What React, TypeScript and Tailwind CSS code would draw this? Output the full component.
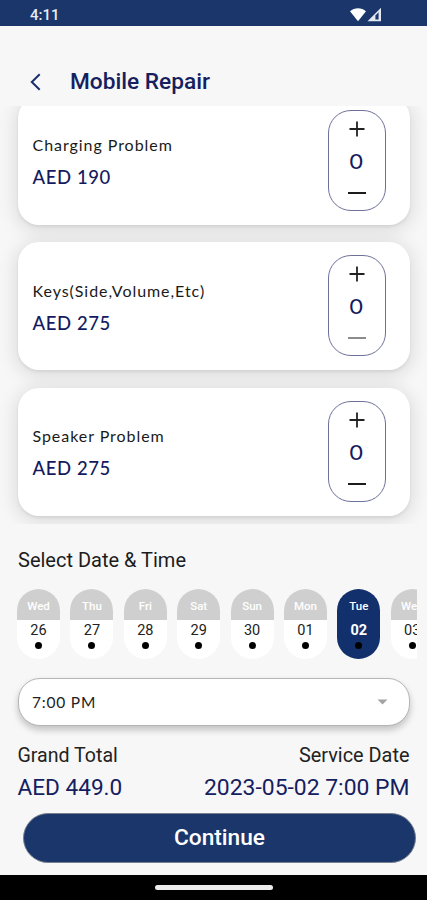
import { clsx } from 'clsx';

const services = [
  { name: 'Charging Problem', price: 'AED 190', tracking: 'tracking-[0.95px]', minus: 'bg-[#1c1c1c]' },
  { name: 'Keys(Side,Volume,Etc)', price: 'AED 275', tracking: 'tracking-[0.95px]', minus: 'bg-[#8c8c8c]' },
  { name: 'Speaker Problem', price: 'AED 275', tracking: 'tracking-[0.95px]', minus: 'bg-[#1c1c1c]' },
];

const days = [
  { day: 'Wed', date: '26' },
  { day: 'Thu', date: '27' },
  { day: 'Fri', date: '28' },
  { day: 'Sat', date: '29' },
  { day: 'Sun', date: '30' },
  { day: 'Mon', date: '01' },
  { day: 'Tue', date: '02', selected: true },
  { day: 'Wed', date: '03' },
];

const StatusBar = () => (
  <div className="flex h-[26px] shrink-0 items-center justify-between bg-[#1a366b] pl-[30px] pr-[45px] pt-1">
    <span className="text-[15px] leading-none font-medium text-[#e8ebf2]">4:11</span>
    <svg width="33" height="15" viewBox="0 0 33 15" className="-mt-[2px]">
      <path d="M1 4.2C5.5.2 12.5.2 17 4.2L9 14.2Z" fill="#fff" />
      <path d="M32 .8V14.2H18.5Z" fill="#e4e8f1" />
      <path d="M26.4 8.4V12.4H29.6V5.2Z" fill="#1a366b" />
    </svg>
  </div>
);

const Header = () => (
  <header className="flex h-20 shrink-0 items-center pl-[30px] pt-[31px]">
    <svg width="11" height="18" viewBox="0 0 11 18" fill="none" stroke="#1a2f6b" strokeWidth="2">
      <path d="M9.7 1.2 1.8 9l7.9 7.8" />
    </svg>
    <h1 className="ml-[29px] pt-0.5 text-[22.7px] leading-none font-medium text-[#15205f]">Mobile Repair</h1>
  </header>
);

const Stepper = ({ minus }: { minus: string }) => (
  <div className="mb-px flex h-[101px] w-[58px] flex-col items-center rounded-[23px] border border-[#6d7198] pt-[10px]">
    <svg width="16" height="16" viewBox="0 0 16 16" stroke="#222" strokeWidth="1.8">
      <path d="M8 .5v15M.5 8h15" />
    </svg>
    <span className="mt-[12px] scale-x-110 font-['Lato'] text-[21px] leading-[24px] text-[#141a5e]">0</span>
    <span className={clsx('mt-[19px] h-[2px] w-[18px]', minus)} />
  </div>
);

const ServiceList = () => (
  <section className="flex h-[418px] shrink-0 flex-col justify-end gap-[17.5px] overflow-hidden px-[17.5px] pb-[8.5px]">
    {services.map((s) => (
      <div
        key={s.name}
        className="flex h-32 shrink-0 items-center justify-between rounded-[21px] bg-white pl-[15px] pr-[24px] shadow-[0_3px_18px_3px_rgba(0,0,0,0.11),0_2px_3px_rgba(0,0,0,0.07)]"
      >
        <div className="pt-px font-['Lato']">
          <p className={clsx('text-[16px] leading-5 text-[#1a1a1a]', s.tracking)}>{s.name}</p>
          <p className="mt-3 text-[18.5px] leading-5 font-medium tracking-[0.6px] text-[#141a5e]">{s.price}</p>
        </div>
        <Stepper minus={s.minus} />
      </div>
    ))}
  </section>
);

const DayPicker = () => (
  <div className="mr-[10px] ml-[17px] mt-[17px] flex gap-[10.4px] overflow-hidden">
    {days.map((d) => (
      <div
        key={d.date}
        className={clsx(
          'flex h-[70px] w-[43px] shrink-0 flex-col items-center overflow-hidden rounded-[21.5px]',
          d.selected ? 'bg-[#12306b] text-white' : 'bg-white text-[#222]',
        )}
      >
        <div
          className={clsx(
            'flex h-[31px] w-full items-center justify-center pt-[4px] text-[11.5px] font-medium text-white',
            !d.selected && 'bg-[#cfcfcf]',
          )}
        >
          {d.day}
        </div>
        <span className={clsx('mt-[2px] text-[14.5px] leading-[18px]', d.selected && 'font-bold')}>{d.date}</span>
        <span className="mt-[2px] size-[7px] rounded-full bg-black" />
      </div>
    ))}
  </div>
);

const Summary = () => (
  <div className="mx-[17.5px] mt-[18px] flex justify-between">
    <div>
      <p className="text-[19.6px] leading-6 text-[#222]">Grand Total</p>
      <p className="mt-[7px] text-[22.6px] leading-[26px] text-[#15205f]">AED 449.0</p>
    </div>
    <div className="text-right">
      <p className="text-[19.9px] leading-6 text-[#222]">Service Date</p>
      <p className="mt-[7px] text-[22.9px] leading-[26px] text-[#15205f]">2023-05-02 7:00 PM</p>
    </div>
  </div>
);

export default function App() {
  return (
    <main className="flex h-[900px] w-[427px] flex-col overflow-hidden bg-[#f7f7f7] font-['Roboto',sans-serif]">
      <StatusBar />
      <Header />
      <ServiceList />
      <h2 className="ml-[18px] mt-[24px] text-[20px] leading-6 text-[#1c1c1c]">Select Date &amp; Time</h2>
      <DayPicker />
      <div className="mx-[17.5px] mt-[19px] flex h-[48px] shrink-0 items-center justify-between rounded-[22px] border border-[#b5b5b5] bg-white pl-[13.5px] pr-[21px] shadow-[0_4px_7px_rgba(0,0,0,0.22)]">
        <span className="pt-px font-['Lato'] text-[15.5px] tracking-[0.8px] text-[#222]">7:00 PM</span>
        <svg width="11" height="6" viewBox="0 0 11 6">
          <path d="M.5.5h10l-5 5Z" fill="#a3a3a3" />
        </svg>
      </div>
      <Summary />
      <button className="ml-[23px] mr-[11px] mt-[12px] h-[50px] shrink-0 rounded-full border border-[#77808f] bg-[#1a366b] text-[22.7px] font-medium text-white">
        Continue
      </button>
      <div className="mt-auto flex h-[25px] shrink-0 items-center justify-center bg-black">
        <span className="h-[5px] w-[118px] rounded-full bg-[#ececec]" />
      </div>
    </main>
  );
}
